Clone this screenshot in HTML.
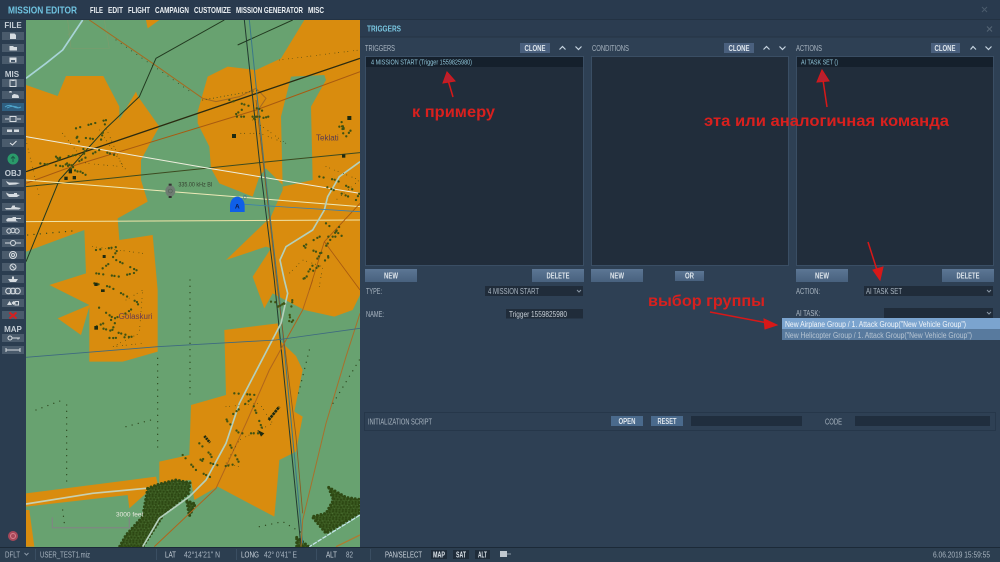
<!DOCTYPE html>
<html><head><meta charset="utf-8"><title>Mission Editor</title>
<style>
html,body{margin:0;padding:0;background:#2d3f52;width:1000px;height:562px;overflow:hidden}
svg{display:block}
#root{filter:blur(.35px)}
text{font-family:"Liberation Sans","Noto Sans CJK JP",sans-serif}
.t{font-size:8px;fill:#aab6c2}
.b{font-size:8px;font-weight:bold;fill:#dfe6ec}
.m{font-size:8.5px;font-weight:bold;fill:#eef2f5}
.s{font-size:8px;font-weight:bold;fill:#c5ced6}
.r{font-size:16px;fill:#d8201e;font-weight:bold}
.sb{fill:#4a5b6c}
.ic{fill:#d5dbe0}
</style></head><body>
<svg id="root" width="1000" height="562" viewBox="0 0 1000 562" xmlns="http://www.w3.org/2000/svg">
<defs>
<pattern id="fo" width="29" height="23" patternUnits="userSpaceOnUse">
<rect width="29" height="23" fill="#3a5a20"/>
<g fill="#2c4612"><circle cx="3" cy="3" r="3"/><circle cx="12" cy="5" r="3.200"/><circle cx="22" cy="2" r="3"/><circle cx="7" cy="12" r="3"/><circle cx="17" cy="13" r="3.200"/><circle cx="26" cy="11" r="3"/><circle cx="3" cy="20" r="3"/><circle cx="13" cy="20" r="3"/><circle cx="23" cy="20" r="3"/></g>
<g fill="#6c9a58"><circle cx="8" cy="7" r="1"/><circle cx="20" cy="8" r="1"/><circle cx="11" cy="16" r="1"/><circle cx="26" cy="17" r="1"/></g>
</pattern>
<linearGradient id="btn" x1="0" y1="0" x2="0" y2="1"><stop offset="0" stop-color="#5c7694"/><stop offset="1" stop-color="#48617e"/></linearGradient>
</defs>
<rect width="1000" height="562" fill="#2d3f52"/>
<rect width="1000" height="20" fill="#293a4e"/>
<rect y="19.500" width="1000" height="1" fill="#1d2a38"/>
<text x="8" y="13.500" font-size="10.500" font-weight="bold" fill="#6fc3e0" textLength="69" lengthAdjust="spacingAndGlyphs">MISSION EDITOR</text>
<text class="m" x="90" y="13" textLength="13" lengthAdjust="spacingAndGlyphs">FILE</text>
<text class="m" x="108" y="13" textLength="15" lengthAdjust="spacingAndGlyphs">EDIT</text>
<text class="m" x="128" y="13" textLength="22" lengthAdjust="spacingAndGlyphs">FLIGHT</text>
<text class="m" x="155" y="13" textLength="34" lengthAdjust="spacingAndGlyphs">CAMPAIGN</text>
<text class="m" x="194" y="13" textLength="37" lengthAdjust="spacingAndGlyphs">CUSTOMIZE</text>
<text class="m" x="236" y="13" textLength="67" lengthAdjust="spacingAndGlyphs">MISSION GENERATOR</text>
<text class="m" x="308" y="13" textLength="16" lengthAdjust="spacingAndGlyphs">MISC</text>
<path d="M982 7l5 5M987 7l-5 5" stroke="#4a5b6c" stroke-width="1"/>

<!-- MAP -->
<svg x="26" y="20" width="334" height="527" viewBox="0 0 1002 1581">
<rect width="1002" height="1581" fill="#68a270"/>
<g fill="#d98c0e">
<path d="M360 0H400L365 25Z"/>
<path d="M0 195L95 228L120 168H232L280 260V300L330 215L335 228L400 320L375 365L345 420V480L365 545L275 595L280 660L380 645L395 810V995L290 1025H190V860L165 945L95 895L190 855L70 795L180 760L175 630L0 695Z"/>
<path d="M835 0H1002V825L980 870L925 890L835 870L740 820L715 865L680 770L735 685L720 680L600 720L735 590L770 510V495L720 445L700 470L680 530L580 490L555 445L550 380L515 310V275L545 170L605 140L690 150L765 115Z"/>
<path d="M595 930L755 910L760 960L810 1008L830 1050L805 1175L830 1190L810 1295L760 1320L755 1380L745 1490L575 1400L505 1440L495 1380L400 1390V1325L490 1305L495 1155L600 1125Z"/>
<path d="M0 1420L390 1370L395 1390L360 1420L310 1465L305 1425L0 1460Z"/>
<path d="M0 1470H10L25 1580H0Z"/>
</g>
<path d="M795 170L895 165L900 180L855 260L860 480L770 500L765 290L780 230Z" fill="#68a270"/>
<path d="M125 0L135 85H250L235 0M125 45L180 0" fill="none" stroke="#8a9a6a" stroke-width="2" opacity=".6"/>
<!-- forests -->
<g fill="url(#fo)" stroke="#2f4a14" stroke-width="9" stroke-linecap="round" stroke-dasharray="0 11">
<path d="M365 1405L400 1392L450 1380L492 1388L488 1420L415 1480L350 1581H280L300 1545L350 1490Z"/>
<path d="M482 1442L508 1452L490 1488Z"/>
<path d="M908 1402L960 1432L1000 1438V1480L900 1540L858 1490L900 1480L922 1440Z"/>
<path d="M812 1552L850 1581H812Z"/>
</g>
<!-- lines -->
<g fill="none" stroke-linejoin="round">
<path d="M0 175L60 130L110 90L170 0" stroke="#a8d4d8" stroke-width="5"/>
<path d="M190 0L380 130L530 235L570 245L640 230L690 205L720 235L700 265" stroke="#a66a20" stroke-width="3"/>
<path d="M595 0L390 115L340 230L240 325L100 480L0 725" stroke="#223a20" stroke-width="3"/>
<path d="M800 0L635 75" stroke="#223a20" stroke-width="3"/>
<path d="M0 490L150 435L690 270L1002 155" stroke="#a85a10" stroke-width="3"/>
<path d="M0 455L1002 115" stroke="#2a2a10" stroke-width="4"/>
<path d="M0 500L250 475L700 428L1002 398" stroke="#3c4a20" stroke-width="3"/>
<path d="M0 350L550 445L1002 520" stroke="#eeeede" stroke-width="3"/>
<path d="M0 480L1002 560" stroke="#eeeab8" stroke-width="3"/>
<path d="M0 605L1002 600" stroke="#f0e4a8" stroke-width="3"/>
<path d="M655 0L700 420L745 780L825 1580" stroke="#223a30" stroke-width="3"/>
<path d="M670 0L715 440L760 830L830 1570" stroke="#3a7888" stroke-width="3"/>
<path d="M690 240L755 810L810 1250L830 1480" stroke="#8a5a20" stroke-width="2.500"/>
<path d="M1002 425L940 470L905 530L895 570L860 630L780 680L762 720L775 780L785 820L765 910L640 1150L600 1270L540 1380L490 1430L400 1495L350 1580" stroke="#b4d0bc" stroke-width="5"/>
<path d="M0 1452L200 1420L360 1405" stroke="#c8d0b0" stroke-width="5"/>
<path d="M860 780L830 870L730 1050L660 1210L570 1405L385 1580" stroke="#b0651c" stroke-width="3"/>
<path d="M1002 880L960 1010L900 1210L830 1500L825 1580" stroke="#a8702c" stroke-width="3"/>
<path d="M0 1012L395 980L750 960L1002 925" stroke="#3e6a80" stroke-width="2.500"/>
<path d="M1002 1485L850 1580" stroke="#c4e4e8" stroke-width="4" stroke-dasharray="14 3"/>
<path d="M930 1580L1002 1545" stroke="#b07a30" stroke-width="4"/>
<path d="M1002 550L895 665L850 810M895 665L1002 810" stroke="#a85a10" stroke-width="2.500"/>
<path d="M656 553L730 558L1002 575" stroke="#3a80b0" stroke-width="2.500"/>
</g>
<!-- tree rows -->
<g fill="none" stroke="#2f4a20" stroke-width="4" stroke-linecap="round" stroke-dasharray="0 19">
<path d="M492 780V1135"/><path d="M395 1015V1300"/><path d="M122 1155V1390"/>
<path d="M300 1220L375 1200"/><path d="M30 1170L110 1140"/>
<path d="M850 990L815 1130"/><path d="M1000 1020L915 1160"/>
<path d="M700 1520L770 1505L830 1540"/>
<path d="M110 1470L115 1510"/>
<path d="M270 60L500 220" stroke-width="3"/>
<path d="M530 240L700 210" stroke-width="3" stroke-dasharray="0 11"/>
<path d="M5 645L150 632"/>
</g>
<!-- settlement blobs -->
<g fill="none" stroke="#3f5212" stroke-linecap="round" stroke-width="7" stroke-dasharray="0 13 0 26 0 8">
<path d="M150 325L240 300L225 360L150 350L180 400L90 415L130 440L220 390L280 410"/>
<path d="M90 410L180 465L120 440L40 430"/>
<path d="M210 690L280 680L250 730L210 760L280 770L340 755L270 720"/>
<path d="M205 790L250 800L340 850L300 880L210 920L320 950L250 955L270 900L215 860"/>
<path d="M610 240L710 270L680 300L730 290L620 290L660 260"/>
<path d="M940 320L975 330L960 350L945 300L955 360"/>
<path d="M880 470L930 480L1000 520L990 540L900 500"/>
<path d="M900 610L950 650L880 650L830 680L910 710L830 780L940 620"/>
<path d="M735 845L775 850L745 865L800 840L790 890L810 910L780 900"/>
<path d="M625 1120L690 1125L600 1200L640 1240L700 1240L710 1230L680 1150"/>
<path d="M520 1270L560 1310L520 1320L590 1340L640 1330L610 1270"/>
<path d="M470 1305L510 1350L570 1380"/>
</g>
<g fill="none" stroke="#2f3a10" stroke-linecap="round" stroke-width="2.500" stroke-dasharray="0 11 0 17">
<path d="M110 340L180 430L290 440L230 300"/><path d="M0 360L40 530"/>
<path d="M220 330L300 450"/>
<path d="M680 300L780 370L700 340L640 340"/>
<path d="M600 1160L700 1150L740 1210L640 1260L600 1330L640 1340"/>
<path d="M300 840L350 810L340 940L260 980L350 970"/>
<path d="M200 680L350 700M760 120L1000 90"/>
<path d="M880 800L890 740L830 720L790 760"/>
<path d="M900 440L1000 480L930 540"/>
</g>
<g fill="#1e2a10">
<rect x="618" y="342" width="12" height="12"/><rect x="948" y="403" width="10" height="10"/><rect x="964" y="288" width="12" height="12"/>
<rect x="115" y="470" width="10" height="10"/><rect x="128" y="448" width="10" height="12"/><rect x="140" y="468" width="10" height="10"/>
<rect x="205" y="788" width="10" height="10"/><rect x="230" y="705" width="9" height="9"/><rect x="205" y="918" width="11" height="11"/><rect x="225" y="808" width="11" height="8"/>
<path d="M728 1200L760 1160" stroke="#1e2a10" stroke-width="8" stroke-dasharray="8 2" fill="none"/>
<path d="M535 1248L552 1268" stroke="#1e2a10" stroke-width="8" stroke-dasharray="6 2" fill="none"/>
<path d="M695 1230L715 1240L705 1250Z"/>
</g>
<!-- NDB -->
<ellipse cx="433" cy="513" rx="15" ry="17" fill="#6e7c72"/>
<circle cx="433" cy="513" r="6" fill="none" stroke="#4c5a50" stroke-width="1.500"/>
<rect x="428" y="491" width="9" height="6" fill="#333"/><rect x="428" y="528" width="9" height="6" fill="#333"/>
<text x="457" y="499" font-size="18" fill="#34402f" textLength="102" lengthAdjust="spacingAndGlyphs">335.00 kHz BI</text>
<!-- unit -->
<path d="M612 576V558C612 542 622 530 634 530C646 530 656 542 656 558V576Z" fill="#0f5fe8"/>
<text x="634" y="566" font-size="20" font-weight="bold" text-anchor="middle" fill="#0a1c50">A</text>
<text x="651" y="538" font-size="20" fill="#3a70a8">0</text>
<text x="870" y="362" font-size="24" fill="#5a3a50">Teklati</text>
<text x="278" y="897" font-size="24" fill="#6a3a50">Golaskuri</text>
<!-- scale -->
<path d="M79 1492V1523H310V1492" fill="none" stroke="#7c8a80" stroke-width="4"/>
<text x="270" y="1489" font-size="18" fill="#eaeae0" textLength="82" lengthAdjust="spacingAndGlyphs">3000 feet</text>
</svg>

<!-- SIDEBAR -->
<rect x="0" y="20" width="26" height="527" fill="#2b3d50"/>
<text class="s" x="13" y="28" text-anchor="middle">FILE</text>
<text class="s" x="12" y="77" text-anchor="middle">MIS</text>
<text class="s" x="13" y="176" text-anchor="middle">OBJ</text>
<text class="s" x="13" y="332" text-anchor="middle">MAP</text>
<g class="sb">
<rect x="2" y="32" width="22" height="8"/><rect x="2" y="44" width="22" height="8"/><rect x="2" y="56" width="22" height="8"/>
<rect x="2" y="79" width="22" height="8"/><rect x="2" y="91" width="22" height="8"/><rect x="2" y="103" width="22" height="8" fill="#2f5f80"/><rect x="2" y="115" width="22" height="8"/><rect x="2" y="127" width="22" height="8"/><rect x="2" y="139" width="22" height="8"/>
<rect x="2" y="179" width="22" height="8"/><rect x="2" y="191" width="22" height="8"/><rect x="2" y="203" width="22" height="8"/><rect x="2" y="215" width="22" height="8"/><rect x="2" y="227" width="22" height="8"/><rect x="2" y="239" width="22" height="8"/><rect x="2" y="251" width="22" height="8"/><rect x="2" y="263" width="22" height="8"/><rect x="2" y="275" width="22" height="8"/><rect x="2" y="287" width="22" height="8"/><rect x="2" y="299" width="22" height="8"/><rect x="2" y="311" width="22" height="8"/>
<rect x="2" y="334" width="22" height="8"/><rect x="2" y="346" width="22" height="8"/>
</g>
<!-- sidebar icons -->
<path class="ic" d="M10 33.500H14.500L16 35V39H10Z"/>
<path class="ic" d="M9.500 46H13L14 47H17V50.500H9.500Z"/>
<path class="ic" d="M9.500 57.500H16.500V62.500H9.500Z"/><rect x="11" y="60" width="4" height="2" fill="#46586b"/>
<rect x="10" y="80" width="6" height="6.500" fill="none" stroke="#d5dbe0"/><rect x="11.500" y="79.500" width="3" height="1.500" class="ic"/>
<path class="ic" d="M9 92.500a1.500 1.500 0 0 1 3 0zM12 98V95.500Q14 93 16 94.500Q19 94 19 98Z"/>
<path d="M5 107Q9 104 13 106.500T21 107M7 108Q13 104.500 19 108" fill="none" stroke="#4fa3c8"/>
<rect x="10" y="116.500" width="6" height="5" fill="none" stroke="#d5dbe0"/><path d="M5 119H9M17 119H21" stroke="#d5dbe0"/>
<path class="ic" d="M7 129.500H12V132H7ZM14 129.500H19V132H14Z"/>
<path d="M10 143L12.500 145L16.500 141" fill="none" stroke="#e4e8ec"/>
<circle cx="13" cy="159" r="5.500" fill="#2a9a6a"/><path d="M13 162V156.500M11 158.500L13 156.500L15 158.500" fill="none" stroke="#1c5a48"/>
<path class="ic" d="M6 181L9 182.500H16L20 183L16 184.500L9 185L7 183Z"/>
<path class="ic" d="M6 192.500L9 194H14V193H17V194.500L20 195L17 197H9L7 195Z"/>
<path class="ic" d="M5 208H11L12.500 205.500H15V207L21 208L19 209.500H6Z"/>
<path class="ic" d="M8 218H12L13 217H16V218H21V219H16L16 220.500L18 221.500H7L6 220Z"/>
<g fill="none" stroke="#d5dbe0"><circle cx="9" cy="231" r="2.200"/><circle cx="13" cy="230.500" r="2.200"/><circle cx="17" cy="231" r="2.200"/>
<path d="M5 243H10M16 243H21"/><circle cx="13" cy="243" r="2.500"/>
<circle cx="13" cy="255" r="3.500"/><circle cx="13" cy="255" r="1.500"/>
<circle cx="13" cy="267" r="3"/><path d="M11.500 265.500L14.500 268.500"/>
<circle cx="8.500" cy="291" r="2.800"/><circle cx="13" cy="291" r="2.800"/><circle cx="17.500" cy="291" r="2.800"/>
<rect x="15" y="301.500" width="3.500" height="3.500"/>
<circle cx="10" cy="338" r="2"/><path d="M12 338H20M18 338V339.500"/>
<path d="M6 350H20M6 348V352M20 348V352"/></g>
<path class="ic" d="M12 276.500H14V279H18L16 282H10L8 279H12Z"/>
<path class="ic" d="M9.500 301L12 305H7Z"/><path class="ic" d="M13 301L15 303L13 305L11 303Z" transform="translate(0.500,0)"/>
<path d="M9.500 312.500L16.500 318.500M16.500 312.500L9.500 318.500" stroke="#d42020" stroke-width="2"/>
<circle cx="13" cy="536" r="5" fill="#a8485a"/><circle cx="13" cy="536" r="2.500" fill="none" stroke="#d8808c"/>

<!-- TRIGGERS PANEL -->
<rect x="360" y="20" width="640" height="527" fill="#2e4054"/>
<rect x="360" y="20" width="640" height="17" fill="#2b3c50"/>
<rect x="360" y="36.500" width="640" height="1" fill="#253545"/>
<text x="367" y="31.500" font-size="8.500" font-weight="bold" fill="#79c6e0" textLength="34" lengthAdjust="spacingAndGlyphs">TRIGGERS</text>
<path d="M987 26.500l5 5M992 26.500l-5 5" stroke="#566676" stroke-width="1"/>
<text class="t" x="365" y="51" textLength="30" lengthAdjust="spacingAndGlyphs">TRIGGERS</text>
<text class="t" x="592" y="51" textLength="37" lengthAdjust="spacingAndGlyphs">CONDITIONS</text>
<text class="t" x="796" y="51" textLength="26" lengthAdjust="spacingAndGlyphs">ACTIONS</text>

<g fill="#4a607e"><rect x="520" y="43" width="30" height="10"/><rect x="724" y="43" width="30" height="10"/><rect x="931" y="43" width="29" height="10"/></g>
<g class="b" text-anchor="middle"><text x="535" y="51" class="b" textLength="21" lengthAdjust="spacingAndGlyphs">CLONE</text><text x="739" y="51" class="b" textLength="21" lengthAdjust="spacingAndGlyphs">CLONE</text><text x="945" y="51" class="b" textLength="21" lengthAdjust="spacingAndGlyphs">CLONE</text></g>
<path d="M559.500 49.500L562.500 46.500L565.500 49.500M575.500 46.500L578.500 49.500L581.500 46.500M763.500 49.500L766.500 46.500L769.500 49.500M779.500 46.500L782.500 49.500L785.500 46.500M970.500 49.500L973 46.500L976 49.500M985.500 46.500L988.500 49.500L991.500 46.500" fill="none" stroke="#c6d4e0" stroke-width="1.200"/>

<g fill="#212d3b" stroke="#3a4e64" stroke-width="1">
<rect x="365.500" y="56.500" width="218" height="209"/><rect x="591.500" y="56.500" width="197" height="209"/><rect x="796.500" y="56.500" width="197" height="209"/>
</g>
<rect x="366" y="57" width="217" height="10" fill="#15202c"/>
<rect x="797" y="57" width="196" height="10" fill="#15202c"/>
<text x="371" y="64.500" font-size="7" fill="#8fc4d8" textLength="101" lengthAdjust="spacingAndGlyphs">4 MISSION START (Trigger 1559825980)</text>
<text x="801" y="64.500" font-size="7" fill="#8fc4d8" textLength="37" lengthAdjust="spacingAndGlyphs">AI TASK SET ()</text>

<g fill="url(#btn)"><rect x="365" y="269" width="52" height="13"/><rect x="532" y="269" width="52" height="13"/><rect x="591" y="269" width="52" height="13"/><rect x="675" y="271" width="29" height="10"/><rect x="796" y="269" width="52" height="13"/><rect x="942" y="269" width="52" height="13"/></g>
<text class="b" x="391" y="278.500" text-anchor="middle" textLength="14" lengthAdjust="spacingAndGlyphs">NEW</text>
<text class="b" x="558" y="278.500" text-anchor="middle" textLength="23" lengthAdjust="spacingAndGlyphs">DELETE</text>
<text class="b" x="617" y="278.500" text-anchor="middle" textLength="14" lengthAdjust="spacingAndGlyphs">NEW</text>
<text class="b" x="689.500" y="278.500" text-anchor="middle" textLength="9" lengthAdjust="spacingAndGlyphs">OR</text>
<text class="b" x="822" y="278.500" text-anchor="middle" textLength="14" lengthAdjust="spacingAndGlyphs">NEW</text>
<text class="b" x="968" y="278.500" text-anchor="middle" textLength="23" lengthAdjust="spacingAndGlyphs">DELETE</text>

<text class="t" x="366" y="294" textLength="16" lengthAdjust="spacingAndGlyphs">TYPE:</text>
<text class="t" x="366" y="317" textLength="18" lengthAdjust="spacingAndGlyphs">NAME:</text>
<text class="t" x="796" y="294" textLength="24" lengthAdjust="spacingAndGlyphs">ACTION:</text>
<text class="t" x="796" y="316" textLength="24" lengthAdjust="spacingAndGlyphs">AI TASK:</text>
<g fill="#202c3a"><rect x="485" y="286" width="98" height="10"/><rect x="506" y="309" width="77" height="9.500"/><rect x="864" y="286" width="129" height="10"/><rect x="884" y="308" width="109" height="10"/></g>
<text class="t" x="488" y="294" textLength="51" lengthAdjust="spacingAndGlyphs">4 MISSION START</text>
<text x="509" y="317" font-size="8" fill="#c8d0d8" textLength="58" lengthAdjust="spacingAndGlyphs">Trigger 1559825980</text>
<text class="t" x="866" y="294" textLength="36" lengthAdjust="spacingAndGlyphs">AI TASK SET</text>
<path d="M577 290L579 292L581 290M987 290L989 292L991 290M987 312L989 314L991 312" fill="none" stroke="#8a98a6"/>

<rect x="782" y="318" width="218" height="11" fill="#7ba4cf"/>
<rect x="782" y="329" width="218" height="11" fill="#587a9e"/>
<text x="785" y="327" font-size="8" fill="#f0f4f8" textLength="181" lengthAdjust="spacingAndGlyphs">New Airplane Group / 1. Attack Group("New Vehicle Group")</text>
<text x="785" y="338" font-size="8" fill="#b6c4d2" textLength="187" lengthAdjust="spacingAndGlyphs">New Helicopter Group / 1. Attack Group("New Vehicle Group")</text>

<rect x="364.500" y="412.500" width="631" height="18" fill="none" stroke="#26374a"/>
<text class="t" x="368" y="424.500" textLength="64" lengthAdjust="spacingAndGlyphs">INITIALIZATION SCRIPT</text>
<rect x="611" y="416" width="32" height="10" fill="#4a6a8c"/><rect x="651" y="416" width="32" height="10" fill="#4a6a8c"/>
<text class="b" x="627" y="424" text-anchor="middle" textLength="17" lengthAdjust="spacingAndGlyphs">OPEN</text>
<text class="b" x="667" y="424" text-anchor="middle" textLength="19" lengthAdjust="spacingAndGlyphs">RESET</text>
<rect x="691" y="416" width="111" height="10" fill="#202e3e"/><rect x="855" y="416" width="135" height="10" fill="#202e3e"/>
<text class="t" x="825" y="424.500" textLength="17" lengthAdjust="spacingAndGlyphs">CODE</text>

<!-- annotations -->
<text class="r" x="412" y="117" textLength="83" lengthAdjust="spacingAndGlyphs">к примеру</text>
<text class="r" x="704" y="126" textLength="245" lengthAdjust="spacingAndGlyphs">эта или аналогичная команда</text>
<text class="r" x="648" y="306" textLength="117" lengthAdjust="spacingAndGlyphs">выбор группы</text>
<g fill="#d81818" stroke="#d81818">
<path d="M453 97L448 80" stroke-width="1.500" fill="none"/><path d="M447 72L443 83L455 81Z" fill="#b82030"/>
<path d="M827 107L823 80" stroke-width="1.500" fill="none"/><path d="M822 70L817 82L829 81Z" fill="#b82030"/>
<path d="M868 242L877 270" stroke-width="1.500" fill="none"/><path d="M880 280L883 267L873 270Z"/>
<path d="M710 312L768 323" stroke-width="1.500" fill="none"/><path d="M777 325L764 319L765 329Z"/>
</g>

<!-- STATUS BAR -->
<rect x="0" y="547" width="1000" height="15" fill="#2c3e50"/>
<rect x="0" y="547" width="1000" height="1" fill="#1c2a38"/>
<text class="t" x="5" y="557.500" textLength="15" lengthAdjust="spacingAndGlyphs">DFLT</text>
<path d="M24.500 553L26.500 555L28.500 553" fill="none" stroke="#8a98a6"/>
<text class="t" x="40" y="557.500" textLength="50" lengthAdjust="spacingAndGlyphs">USER_TEST1.miz</text>
<text x="165" y="557.500" font-size="8" fill="#ccd4dc" textLength="11" lengthAdjust="spacingAndGlyphs">LAT</text>
<text class="t" x="184" y="557.500" textLength="36" lengthAdjust="spacingAndGlyphs">42°14'21" N</text>
<text x="241" y="557.500" font-size="8" fill="#ccd4dc" textLength="18" lengthAdjust="spacingAndGlyphs">LONG</text>
<text class="t" x="264" y="557.500" textLength="33" lengthAdjust="spacingAndGlyphs">42° 0'41" E</text>
<text x="326" y="557.500" font-size="8" fill="#ccd4dc" textLength="11" lengthAdjust="spacingAndGlyphs">ALT</text>
<text class="t" x="346" y="557.500" textLength="7" lengthAdjust="spacingAndGlyphs">82</text>
<text x="385" y="557.500" font-size="8" fill="#ccd4dc" textLength="37" lengthAdjust="spacingAndGlyphs">PAN/SELECT</text>
<g fill="#1f2c3a"><rect x="431" y="550" width="16" height="9"/><rect x="453" y="550" width="16" height="9"/><rect x="475" y="550" width="15" height="9"/></g>
<text class="b" x="439" y="557.500" text-anchor="middle" textLength="12" lengthAdjust="spacingAndGlyphs">MAP</text>
<text class="b" x="461" y="557.500" text-anchor="middle" textLength="10" lengthAdjust="spacingAndGlyphs">SAT</text>
<text class="b" x="482.500" y="557.500" text-anchor="middle" textLength="9" lengthAdjust="spacingAndGlyphs">ALT</text>
<rect x="500" y="551" width="7" height="6" fill="#c0c8d0"/><path d="M507 554H511" stroke="#8a98a6"/>
<text class="t" x="933" y="557.500" textLength="57" lengthAdjust="spacingAndGlyphs">6.06.2019 15:59:55</text>
<g fill="#3a4e62"><rect x="35" y="549" width="1" height="11"/><rect x="156" y="549" width="1" height="11"/><rect x="236" y="549" width="1" height="11"/><rect x="316" y="549" width="1" height="11"/><rect x="370" y="549" width="1" height="11"/></g>
</svg>
</body></html>
